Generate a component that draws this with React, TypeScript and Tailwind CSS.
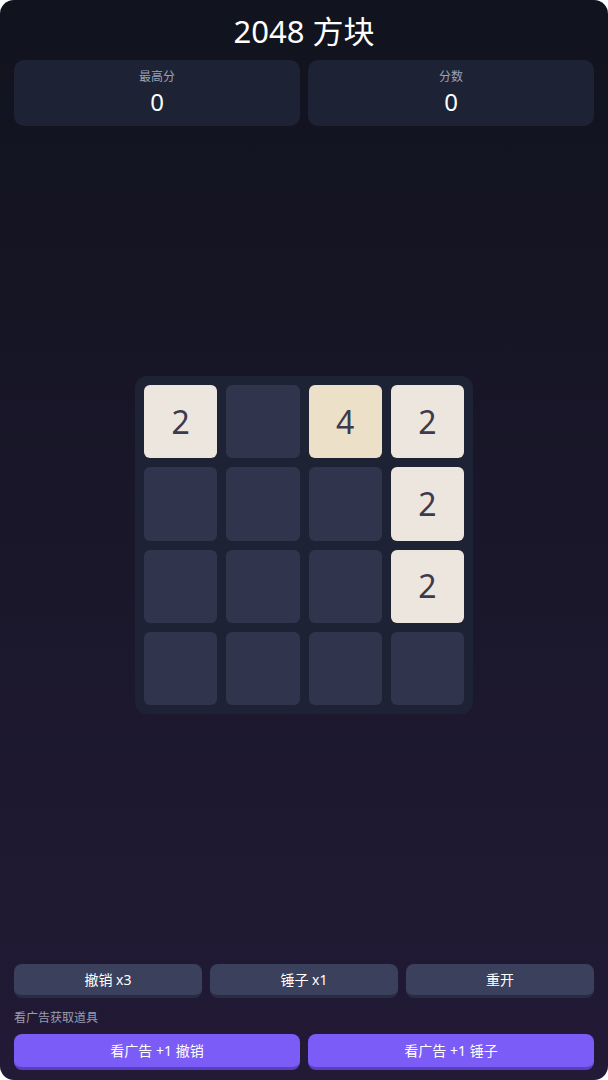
import React from "react";

const tiles = [2, 0, 4, 2, 0, 0, 0, 2, 0, 0, 0, 2, 0, 0, 0, 0];

function tileClass(v: number) {
  if (v === 2) return "bg-[#ede6de]";
  if (v === 4) return "bg-[#ede0c8]";
  return "bg-[#30344d]";
}

export default function App() {
  return (
    <div className="bg-white w-[608px] h-[1080px]" style={{ fontFamily: '"Noto Sans", "Noto Sans CJK SC", sans-serif' }}>
      <div className="w-full h-full rounded-[14px] overflow-hidden bg-gradient-to-b from-[#11131e] to-[#221a36] flex flex-col px-[14px] pb-[10px]">
        <div className="pt-[10px] h-[50px] text-center text-white text-[31px] leading-[42px] mb-[10px]">2048 方块</div>
        <div className="grid grid-cols-2 gap-[8px]">
          {[
            ["最高分", "0"],
            ["分数", "0"],
          ].map(([l, v]) => (
            <div key={l} className="h-[66px] rounded-[10px] bg-[#1e2235] flex flex-col items-center pt-[9px]">
              <div className="text-[12px] leading-[16px] text-[#9ca1b6]">{l}</div>
              <div className="text-[24px] leading-[34px] text-white">{v}</div>
            </div>
          ))}
        </div>
        <div className="flex-1 flex items-center justify-center">
          <div className="w-[338px] h-[338px] rounded-[12px] bg-[#1e2235] p-[9px] grid grid-cols-4 grid-rows-4 gap-[9px]">
            {tiles.map((v, i) => (
              <div key={i} className={`rounded-[6px] flex items-center justify-center text-[32px] text-[#3c3a4d] ${tileClass(v)}`}>
                {v ? v : ""}
              </div>
            ))}
          </div>
        </div>
        <div className="grid grid-cols-3 gap-[8px]">
          {["撤销 x3", "锤子 x1", "重开"].map((t) => (
            <div key={t} className="h-[34px] rounded-[8px] bg-[#3b405d] border-b-[3px] border-[#2a2c46] flex items-center justify-center text-[14px] text-white">
              {t}
            </div>
          ))}
        </div>
        <div className="mt-[11px] h-[18px] text-[12px] leading-[18px] text-[#9a9db0]">看广告获取道具</div>
        <div className="mt-[7px] grid grid-cols-2 gap-[8px]">
          {["看广告 +1 撤销", "看广告 +1 锤子"].map((t) => (
            <div key={t} className="h-[36px] rounded-[8px] bg-[#7c5cf6] border-b-[3px] border-[#5a3fc4] flex items-center justify-center text-[14px] text-white">
              {t}
            </div>
          ))}
        </div>
      </div>
    </div>
  );
}
